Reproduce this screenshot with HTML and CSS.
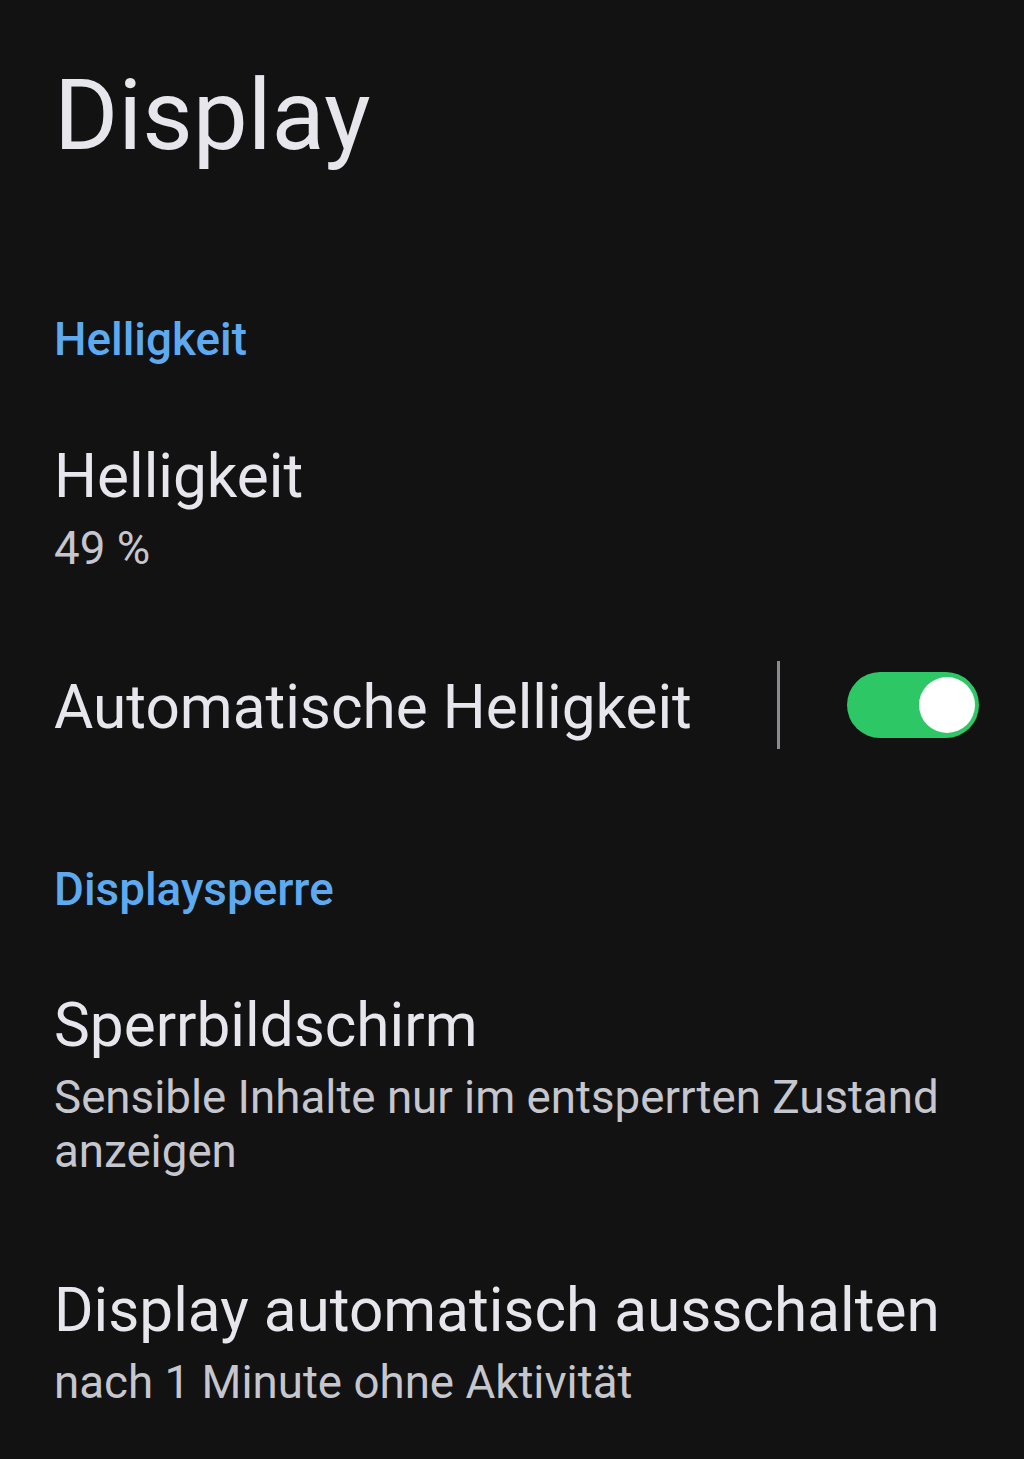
FILE: index.html
```html
<!DOCTYPE html>
<html lang="de">
<head>
<meta charset="utf-8">
<title>Display</title>
<link rel="stylesheet" href="styles.css">
</head>
<body>
<main class="page">
  <h1 class="page-title">Display</h1>

  <h2 class="section-title sec-1">Helligkeit</h2>
  <div class="item item-brightness">
    <div class="item-title">Helligkeit</div>
    <div class="item-sub">49 %</div>
  </div>
  <div class="item-row">
    <div class="item-title row-title">Automatische Helligkeit</div>
    <div class="divider"></div>
    <div class="toggle on"><div class="knob"></div></div>
  </div>

  <h2 class="section-title sec-2">Displaysperre</h2>
  <div class="item item-lock">
    <div class="item-title">Sperrbildschirm</div>
    <div class="item-sub">Sensible Inhalte nur im entsperrten Zustand anzeigen</div>
  </div>
  <div class="item item-timeout">
    <div class="item-title">Display automatisch ausschalten</div>
    <div class="item-sub">nach 1 Minute ohne Aktivität</div>
  </div>
</main>
</body>
</html>
```

FILE: styles.css
```css
html, body {
  margin: 0;
  padding: 0;
  background: #121212;
}
body {
  font-family: Roboto, "Noto Sans", "Liberation Sans", sans-serif;
  color: #e5e5ea;
  width: 1024px;
  min-height: 1459px;
}
.page {
  padding: 58px 45px 0 54px;
}
.page-title {
  margin: 0;
  font-size: 98px;
  line-height: 116px;
  font-weight: 400;
  color: #e6e6ec;
}
.section-title {
  margin: 0;
  font-size: 45.8px;
  line-height: 52px;
  font-weight: 500;
  color: #5eaaf0;
}
.sec-1 { margin-top: 140px; }
.sec-2 { margin-top: 115px; }
.item-title {
  font-size: 60.3px;
  line-height: 70px;
  color: #e6e6ec;
}
.item-sub {
  margin-top: 10px;
  font-size: 45.7px;
  line-height: 54px;
  color: #c6c6ce;
}
.item-brightness { margin-top: 76px; }
.item-lock { margin-top: 75px; }
.item-timeout { margin-top: 97px; }
.item-row {
  margin-top: 85px;
  height: 88px;
  display: flex;
  align-items: center;
}
.row-title {
  flex: 1;
  padding-top: 5px;
}
.divider {
  width: 3px;
  height: 88px;
  background: #8a8a90;
  margin-right: 67px;
}
.toggle {
  width: 132px;
  height: 66px;
  border-radius: 33px;
  background: #2ec766;
  display: flex;
  align-items: center;
  justify-content: flex-end;
  padding-right: 4px;
  box-sizing: border-box;
}
.knob {
  width: 56px;
  height: 56px;
  border-radius: 50%;
  background: #ffffff;
}
```
